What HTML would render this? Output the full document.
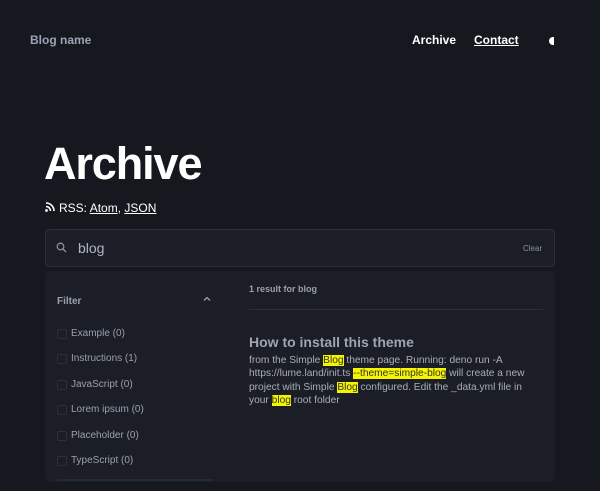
<!DOCTYPE html>
<html><head><style>
*{margin:0;padding:0;box-sizing:border-box}
body{width:600px;height:491px;background:#15181f;font-family:"Liberation Sans",sans-serif;overflow:hidden;position:relative;color:#c9ced8}
.a{position:absolute;white-space:nowrap}
mark{background:#f5f500;color:#333}
.cb{position:absolute;left:57px;width:10px;height:10px;border:1px solid #2c303a;border-radius:2px}
.fl{position:absolute;left:71px;font-size:10px;color:#9aa0ac}
</style></head><body>
<div class="a" style="left:30px;top:33px;font-size:12px;font-weight:bold;color:#9aa3b2">Blog name</div>
<div class="a" style="left:412px;top:33px;font-size:12px;font-weight:bold;color:#fff">Archive</div>
<div class="a" style="left:474px;top:33px;font-size:12px;font-weight:bold;color:#fff;text-decoration:underline">Contact</div>
<div class="a" style="left:549px;top:37px;width:5px;height:8px;background:#fff;border-radius:4px 0 0 4px"></div>
<div class="a" style="left:44px;top:138px;font-size:45px;font-weight:bold;color:#fff;letter-spacing:-1.1px">Archive</div>
<svg class="a" style="left:45px;top:202px" width="10" height="10" viewBox="0 0 10 10"><circle cx="1.5" cy="8.5" r="1.4" fill="#fff"/><path d="M1 4.5a4.5 4.5 0 0 1 4.5 4.5M1 1a8 8 0 0 1 8 8" stroke="#fff" stroke-width="1.6" fill="none"/></svg>
<div class="a" style="left:59px;top:201px;font-size:12px;color:#fff">RSS: <u>Atom</u>, <u>JSON</u></div>
<div class="a" style="left:45px;top:229px;width:510px;height:38px;background:#1b1e26;border:1px solid #2a2e38;border-radius:4px"></div>
<svg class="a" style="left:56px;top:242px" width="11" height="11" viewBox="0 0 11 11"><circle cx="4.5" cy="4.5" r="3.3" stroke="#8a909c" stroke-width="1.3" fill="none"/><path d="M7 7l3 3" stroke="#8a909c" stroke-width="1.3"/></svg>
<div class="a" style="left:78px;top:240px;font-size:14px;color:#b0b6c2">blog</div>
<div class="a" style="left:523px;top:244px;font-size:8px;color:#8a909c">Clear</div>
<div class="a" style="left:45px;top:271px;width:510px;height:211px;background:#1b1e26;border-radius:4px"></div>
<div class="a" style="left:57px;top:296px;font-size:10px;font-weight:bold;color:#9aa0ac">Filter</div>
<svg class="a" style="left:203px;top:296px" width="8" height="6" viewBox="0 0 8 6"><path d="M1 4.5L4 1.5 7 4.5" stroke="#9aa0ac" stroke-width="1.3" fill="none"/></svg>
<div class="cb" style="top:329px"></div><div class="fl" style="top:328px">Example (0)</div>
<div class="cb" style="top:354px"></div><div class="fl" style="top:353px">Instructions (1)</div>
<div class="cb" style="top:380px"></div><div class="fl" style="top:379px">JavaScript (0)</div>
<div class="cb" style="top:405px"></div><div class="fl" style="top:404px">Lorem ipsum (0)</div>
<div class="cb" style="top:431px"></div><div class="fl" style="top:430px">Placeholder (0)</div>
<div class="cb" style="top:456px"></div><div class="fl" style="top:455px">TypeScript (0)</div>
<div class="a" style="left:57px;top:479px;width:156px;height:2px;background:#252933"></div>
<div class="a" style="left:249px;top:284px;font-size:9px;font-weight:bold;color:#9aa0ac">1 result for blog</div>
<div class="a" style="left:249px;top:309px;width:294px;height:1px;background:#2c303a"></div>
<div class="a" style="left:249px;top:334px;font-size:14px;font-weight:bold;color:#9ea4b0">How to install this theme</div>
<div class="a" style="left:249px;top:354px;font-size:10.2px;line-height:13.4px;color:#a8aeb9">from the Simple <mark>Blog</mark> theme page. Running: deno run -A<br>https://lume.land/init.ts <mark>--theme=simple-blog</mark> will create a new<br>project with Simple <mark>Blog</mark> configured. Edit the _data.yml file in<br>your <mark>blog</mark> root folder</div>
</body></html>
